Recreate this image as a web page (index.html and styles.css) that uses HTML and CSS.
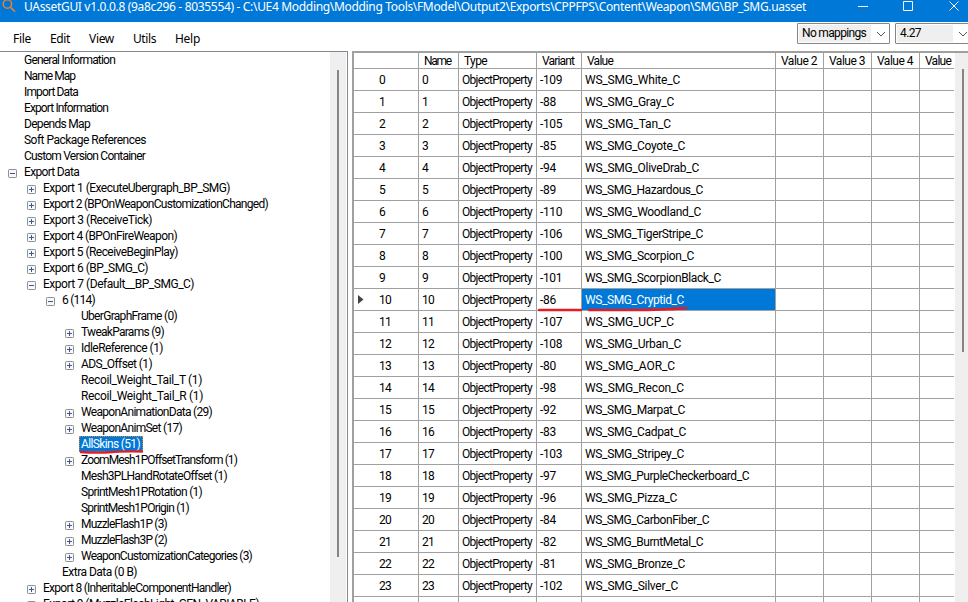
FILE: index.html
```html
<!DOCTYPE html>
<html lang="en">
<head>
<meta charset="utf-8">
<title>UAssetGUI</title>
<link rel="stylesheet" href="styles.css">
</head>
<body>
<div class="window">
  <header class="titlebar">
    <svg class="app-icon" width="14" height="14" viewBox="0 0 14 14"><circle cx="5.4" cy="4" r="4.2"/><path d="M8.3 7.2L13 11.7"/></svg>
    <span class="title" data-w="782">UAssetGUI v1.0.0.8 (9a8c296 - 8035554) - C:\UE4 Modding\Modding Tools\FModel\Output2\Exports\CPPFPS\Content\Weapon\SMG\BP_SMG.uasset</span>
    <svg class="controls" width="110" height="22" viewBox="0 0 110 22"><path d="M0 6.500h10M45.500 1.500h9v9h-9zM91.500 1.500l9 9M100.500 1.500l-9 9"/></svg>
  </header>
  <nav class="menubar">
    <div class="menu">
      <span class="m-file" data-w="18">File</span>
      <span class="m-edit" data-w="20">Edit</span>
      <span class="m-view" data-w="25">View</span>
      <span class="m-utils" data-w="23">Utils</span>
      <span class="m-help" data-w="25">Help</span>
    </div>
    <div class="combo mappings"><div class="combo-text"><span data-w="64">No mappings</span></div><svg width="10" height="6" viewBox="0 0 10 6"><path d="M1 1l4 4 4-4"/></svg></div>
    <div class="combo version"><div class="combo-text"><span data-w="21">4.27</span></div><svg width="10" height="6" viewBox="0 0 10 6"><path d="M1 1l4 4 4-4"/></svg></div>
  </nav>
  <main class="panes">
    <section class="tree-pane">
      <div class="tree" id="tree"></div>
      <div class="tree-scroll"><div class="tree-thumb"></div></div>
    </section>
    <section class="grid-pane">
      <div class="grid" id="grid"></div>
      <div class="grid-scroll"><div class="grid-thumb"></div></div>
    </section>
  </main>
</div>
<script src="app.js"></script>
</body>
</html>
```
FILE: styles.css
```css
* { box-sizing: border-box; }
body { margin: 0; background: #fff; overflow: hidden; font: 12px/16px Roboto, "Liberation Sans", sans-serif; color: #000; }
svg { display: block; flex: none; fill: none; }
.window { width: 968px; height: 602px; display: flex; flex-direction: column; overflow: hidden; }
.titlebar { height: 22px; flex: none; display: flex; background: #0078d7; color: #fff; font: 12px/14px "Noto Sans", "Open Sans", sans-serif; }
.app-icon { margin-left: 2px; stroke: #e08036; stroke-width: 1.6; }
.title { margin-left: 8px; width: 834px; white-space: nowrap; }
.controls { stroke: #fff; stroke-width: 1; }
.menubar { height: 29px; flex: none; display: flex; }
.menu { display: flex; flex: none; width: 797px; padding: 9px 0 0 13px; font: 12px/16px "Noto Sans", "Open Sans", sans-serif; }
.menu span { flex: none; white-space: nowrap; }
.m-file { width: 37px; }
.m-edit { width: 39px; }
.m-view { width: 44px; }
.m-utils { width: 42px; }
.combo { flex: none; height: 21px; margin-top: 1px; border: 1px solid #858585; border-radius: 1px; background: #fff; display: flex; align-items: center; padding-left: 1px; }
.combo svg { stroke: #555; margin-left: 5px; }
.mappings { width: 93px; }
.mappings .combo-text { width: 72px; }
.version { width: 80px; margin-left: 5px; }
.version .combo-text { width: 56px; }
.version svg { margin-left: 5px; }
.combo-text { flex: none; height: 17px; background: #efefef; padding-left: 3px; line-height: 17px; white-space: nowrap; }
.panes { flex: 1; min-height: 0; display: flex; }
.tree-pane { width: 348px; flex: none; display: flex; border-top: 1px solid #828790; border-right: 1px solid #828790; overflow: hidden; }
.tree { width: 330px; flex: none; }
.node { height: 16px; display: flex; align-items: center; white-space: nowrap; padding-left: 8px; }
.level-1 { padding-left: 27px; }
.level-2 { padding-left: 46px; }
.level-3 { padding-left: 65px; }
.toggle { width: 9px; height: 9px; margin: 2px 5px 0 0; flex: none; }
.toggle rect { fill: #f8f8f8; stroke: #919191; }
.toggle path { stroke: #3d5a96; }
.label { height: 16px; line-height: 16px; padding: 0 2px; }
.selected { position: relative; background: #0078d7; color: #fff; outline: 1px dotted #d98728; outline-offset: -1px; width: 64px; }
.mark { position: absolute; stroke: #e51c23; stroke-width: 2.4; stroke-linecap: round; overflow: visible; }
.mark-tree { left: 1px; top: 12px; }
.mark-variant { left: 1px; top: 18px; }
.mark-value { left: 6px; top: 17px; }
.tree-scroll { width: 16px; background: #efefef; padding: 18px 0 0 7px; }
.tree-thumb { width: 2px; height: 487px; background: #858585; }
.grid-pane { width: 616px; flex: none; margin-left: 4px; border-top: 2px solid #a0a0a0; border-left: 2px solid #a0a0a0; display: flex; }
.grid { width: 600px; flex: none; height: 549px; overflow: hidden; }
.row { display: grid; grid-template-columns: 65px 40px 78px 45px 194px 48px 48px 48px 36px; grid-template-rows: 100%; width: 602px; height: 22px; }
.head { height: 16px; }
.cell { position: relative; border-right: 1px solid #a0a0a0; border-bottom: 1px solid #a0a0a0; padding: 1px 0 0 3px; line-height: 20px; white-space: nowrap; }
.head .cell { padding-left: 5px; line-height: 14px; }
.cell.index { padding-left: 25px; }
.cell.active { background: #0078d7; color: #fff; }
.pointer { position: absolute; left: 4px; top: 6px; fill: #444; }
.grid-scroll { flex: 1; background: #efefef; margin: 0 0 0 1px; padding: 16px 0 0 7px; }
.grid-thumb { width: 2px; height: 283px; background: #858585; }
```
FILE: app.js
```js
// [level, toggle, label, label width]
const nodes = [
  [0, '', 'General Information', 91], [0, '', 'Name Map', 51], [0, '', 'Import Data', 54],
  [0, '', 'Export Information', 84], [0, '', 'Depends Map', 66], [0, '', 'Soft Package References', 122],
  [0, '', 'Custom Version Container', 121], [0, '-', 'Export Data', 55],
  [1, '+', 'Export 1 (ExecuteUbergraph_BP_SMG)', 187], [1, '+', 'Export 2 (BPOnWeaponCustomizationChanged)', 225],
  [1, '+', 'Export 3 (ReceiveTick)', 109], [1, '+', 'Export 4 (BPOnFireWeapon)', 134],
  [1, '+', 'Export 5 (ReceiveBeginPlay)', 135], [1, '+', 'Export 6 (BP_SMG_C)', 105],
  [1, '-', 'Export 7 (Default__BP_SMG_C)', 151], [2, '-', '6 (114)', 33],
  [3, '', 'UberGraphFrame (0)', 96], [3, '+', 'TweakParams (9)', 83], [3, '+', 'IdleReference (1)', 82],
  [3, '+', 'ADS_Offset (1)', 71], [3, '', 'Recoil_Weight_Tail_T (1)', 121], [3, '', 'Recoil_Weight_Tail_R (1)', 122],
  [3, '+', 'WeaponAnimationData (29)', 131], [3, '+', 'WeaponAnimSet (17)', 101], [3, '', 'AllSkins (51)', 59],
  [3, '+', 'ZoomMesh1POffsetTransform (1)', 156], [3, '', 'Mesh3PLHandRotateOffset (1)', 146],
  [3, '', 'SprintMesh1PRotation (1)', 121], [3, '', 'SprintMesh1POrigin (1)', 108],
  [3, '+', 'MuzzleFlash1P (3)', 86], [3, '+', 'MuzzleFlash3P (2)', 86],
  [3, '+', 'WeaponCustomizationCategories (3)', 171], [2, '', 'Extra Data (0 B)', 75],
  [1, '+', 'Export 8 (InheritableComponentHandler)', 188], [1, '+', 'Export 9 (MuzzleFlashLight_GEN_VARIABLE)', 216]
];
// [variant, value, value width]
const rows = [
  [-109, 'White', 95], [-88, 'Gray', 89], [-105, 'Tan', 86], [-85, 'Coyote', 100], [-94, 'OliveDrab', 114],
  [-89, 'Hazardous', 118], [-110, 'Woodland', 116], [-106, 'TigerStripe', 118], [-100, 'Scorpion', 109],
  [-101, 'ScorpionBlack', 136], [-86, 'Cryptid', 99], [-107, 'UCP', 89], [-108, 'Urban', 96], [-80, 'AOR', 90],
  [-98, 'Recon', 99], [-92, 'Marpat', 100], [-83, 'Cadpat', 101], [-103, 'Stripey', 99],
  [-97, 'PurpleCheckerboard', 164], [-96, 'Pizza', 92], [-84, 'CarbonFiber', 124], [-82, 'BurntMetal', 118],
  [-81, 'Bronze', 100], [-102, 'Silver', 93]
];
const text = (s, w) => `<span data-w="${w}">${s}</span>`;
const mark = (name, d) => `<svg class="mark mark-${name}" width="1" height="1"><path d="${d}"/></svg>`;

document.getElementById('tree').innerHTML = nodes.map(([level, sign, label, w]) => {
  const toggle = sign
    ? `<svg class="toggle" viewBox="0 0 9 9"><rect x=".5" y=".5" width="8" height="8" rx=".7"/><path d="M2 4.500h5${sign === '+' ? 'M4.500 2v5' : ''}"/></svg>`
    : '<span class="toggle"></span>';
  const on = label.startsWith('AllSkins');
  return `<div class="node level-${level}">${toggle}<div class="label${on ? ' selected' : ''}">${text(label, w)}${on ? mark('tree', 'M1 4Q12 5 25 4.500Q44 3 62 3.500') : ''}</div></div>`;
}).join('');

const head = [['', 0], ['Name', 27], ['Type', 23], ['Variant', 32], ['Value', 26], ['Value 2', 36], ['Value 3', 36], ['Value 4', 36], ['Value', 26]];
document.getElementById('grid').innerHTML =
  `<div class="row head">${head.map(([s, w]) => `<div class="cell">${s ? text(s, w) : ''}</div>`).join('')}</div>` +
  rows.map(([variant, name, w], i) => {
    const on = name === 'Cryptid';
    const n = text(i, i > 9 ? 12 : 6);
    return `<div class="row">
      <div class="cell index">${on ? '<svg class="pointer" width="6" height="9" viewBox="0 0 6 9"><path d="M0 0l5.500 4.500L0 9z"/></svg>' : ''}${n}</div>
      <div class="cell">${n}</div><div class="cell">${text('ObjectProperty', 70)}</div>
      <div class="cell">${text(variant, variant < -99 ? 22 : 16)}${on ? mark('variant', 'M1 3H43') : ''}</div>
      <div class="cell${on ? ' active' : ''}">${text(`WS_SMG_${name}_C`, w)}${on ? mark('value', 'M1 4H45Q75 4 98 2') : ''}</div>
      ${'<div class="cell"></div>'.repeat(4)}</div>`;
  }).join('') + `<div class="row">${'<div class="cell"></div>'.repeat(9)}</div>`;

// Tighten or loosen the tracking so each label fills its measured width.
document.querySelectorAll('[data-w]').forEach(el => {
  const range = document.createRange();
  range.selectNodeContents(el);
  const natural = range.getBoundingClientRect().width;
  el.style.letterSpacing = (el.dataset.w - natural) / el.textContent.length + 'px';
});
```
